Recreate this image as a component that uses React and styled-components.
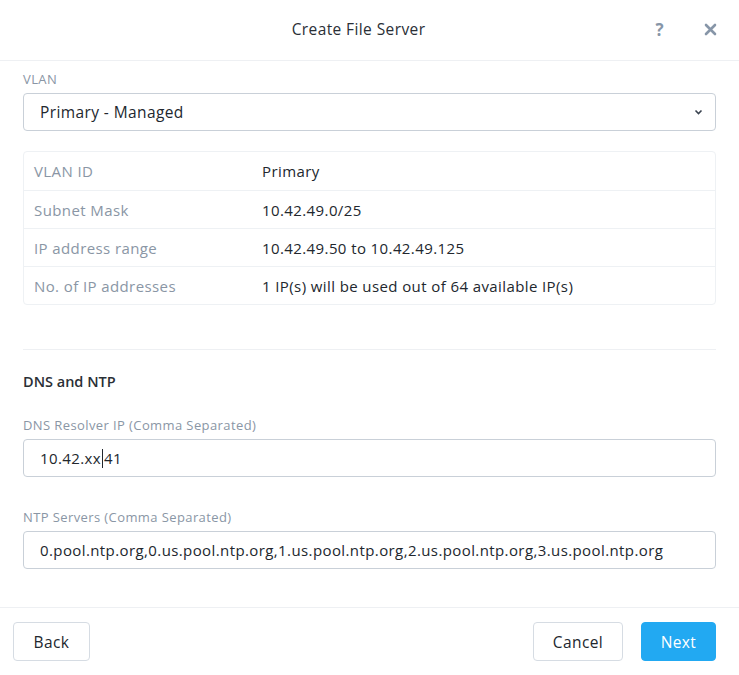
import React from "react";
import styled, { createGlobalStyle } from "styled-components";

const GlobalStyle = createGlobalStyle`
  * { box-sizing: border-box; }
  body {
    margin: 0;
    background: #ffffff;
    font-family: "Open Sans", Lato, sans-serif;
    color: #22272e;
    letter-spacing: 0.4px;
  }
`

const Dialog = styled.div`
  width: 739px;
  height: 675px;
  display: flex;
  flex-direction: column;
  background: #fff;
`

const Header = styled.header`
  height: 61px;
  border-bottom: 1px solid #eef0f3;
  display: grid;
  grid-template-columns: 1fr auto 1fr;
  align-items: center;
  padding: 0 22px 2px 0;
`

const Title = styled.h1`
  grid-column: 2;
  margin: 0;
  font-size: 15.5px;
  font-weight: 400;
  color: #2a2f36;
`

const HeaderIcons = styled.div`
  grid-column: 3;
  justify-self: end;
  display: flex;
  align-items: center;
  gap: 40px;
`

const IconButton = styled.span`
  color: #8796a8;
  font-size: 17px;
  font-weight: 700;
  line-height: 1;
  display: flex;
  align-items: center;
`

const Body = styled.div`
  flex: 1;
  padding: 10px 23px 0;
  display: flex;
  flex-direction: column;
`

const Label = styled.label`
  display: block;
  font-size: 13px;
  line-height: 16px;
  color: #8a96a5;
  margin-bottom: 6px;
`

const SelectBox = styled.div`
  height: 38px;
  border: 1px solid #c9d0d8;
  border-radius: 4px;
  display: flex;
  align-items: center;
  justify-content: space-between;
  padding: 0 12px 0 16px;
  font-size: 15.5px;
  color: #22272e;
`

const InfoTable = styled.div`
  margin-top: 20px;
  border: 1px solid #eef1f4;
  border-radius: 4px;
`

const InfoRow = styled.div`
  display: grid;
  grid-template-columns: 228px 1fr;
  height: 38px;
  align-items: center;
  padding: 0 10px;
  font-size: 15px;
  & + & {
    border-top: 1px solid #eef1f4;
  }
`

const InfoKey = styled.span`
  color: #8a96a5;
`

const InfoValue = styled.span`
  color: #22272e;
`

const Divider = styled.hr`
  border: none;
  border-top: 1px solid #eef0f3;
  margin: 44px 0 0;
`

const SectionTitle = styled.h2`
  margin: 22px 0 0;
  font-size: 14.5px;
  font-weight: 600;
  letter-spacing: 0;
  color: #2a2f36;
`

const Field = styled.div`
  margin-top: ${p => p.$top}px;
`

const TextInput = styled.div`
  height: 38px;
  border: 1px solid #c9d0d8;
  border-radius: 4px;
  display: flex;
  align-items: center;
  padding: 0 16px;
  font-size: 15px;
  color: #22272e;
  white-space: nowrap;
  overflow: hidden;
`

const Caret = styled.span`
  display: inline-block;
  width: 1px;
  height: 19px;
  background: #22272e;
  margin: 0 1px;
`

const Footer = styled.footer`
  border-top: 1px solid #eef0f3;
  height: 68px;
  display: flex;
  align-items: center;
  justify-content: space-between;
  padding: 0 23px 0 13px;
`

const ButtonGroup = styled.div`
  display: flex;
  gap: 18px;
`

const Button = styled.button`
  height: 39px;
  min-width: ${p => p.$width}px;
  padding: 0 16px;
  border-radius: 4px;
  font-family: inherit;
  letter-spacing: inherit;
  font-size: 15.5px;
  border: 1px solid ${p => (p.$primary ? "#22a9f2" : "#d6dce3")};
  background: ${p => (p.$primary ? "#22a9f2" : "#fff")};
  color: ${p => (p.$primary ? "#fff" : "#22272e")};
`

const rows = [
  ["VLAN ID", "Primary"],
  ["Subnet Mask", "10.42.49.0/25"],
  ["IP address range", "10.42.49.50 to 10.42.49.125"],
  ["No. of IP addresses", "1 IP(s) will be used out of 64 available IP(s)"],
];

const App = () => {
  return (
    <>
      <GlobalStyle />
      <Dialog>
        <Header>
          <Title>Create File Server</Title>
          <HeaderIcons>
            <IconButton>?</IconButton>
            <IconButton>
              <svg width="13" height="13" viewBox="0 0 13 13">
                <path d="M2 2 L11 11 M11 2 L2 11" stroke="#8796a8" strokeWidth="2.6" strokeLinecap="round" />
              </svg>
            </IconButton>
          </HeaderIcons>
        </Header>
        <Body>
          <Label>VLAN</Label>
          <SelectBox>
            <span>Primary - Managed</span>
            <svg width="9" height="6" viewBox="0 0 9 6">
              <path d="M1.5 1.5 L4.5 4.5 L7.5 1.5" stroke="#3a4350" strokeWidth="1.6" fill="none" />
            </svg>
          </SelectBox>
          <InfoTable>
            {rows.map(([k, v]) => (
              <InfoRow key={k}>
                <InfoKey>{k}</InfoKey>
                <InfoValue>{v}</InfoValue>
              </InfoRow>
            ))}
          </InfoTable>
          <Divider />
          <SectionTitle>DNS and NTP</SectionTitle>
          <Field $top={26}>
            <Label>DNS Resolver IP (Comma Separated)</Label>
            <TextInput>
              10.42.xx<Caret />41
            </TextInput>
          </Field>
          <Field $top={32}>
            <Label>NTP Servers (Comma Separated)</Label>
            <TextInput>
              0.pool.ntp.org,0.us.pool.ntp.org,1.us.pool.ntp.org,2.us.pool.ntp.org,3.us.pool.ntp.org
            </TextInput>
          </Field>
        </Body>
        <Footer>
          <Button $width={77}>Back</Button>
          <ButtonGroup>
            <Button $width={90}>Cancel</Button>
            <Button $width={75} $primary>Next</Button>
          </ButtonGroup>
        </Footer>
      </Dialog>
    </>
  );
};

export default App;
